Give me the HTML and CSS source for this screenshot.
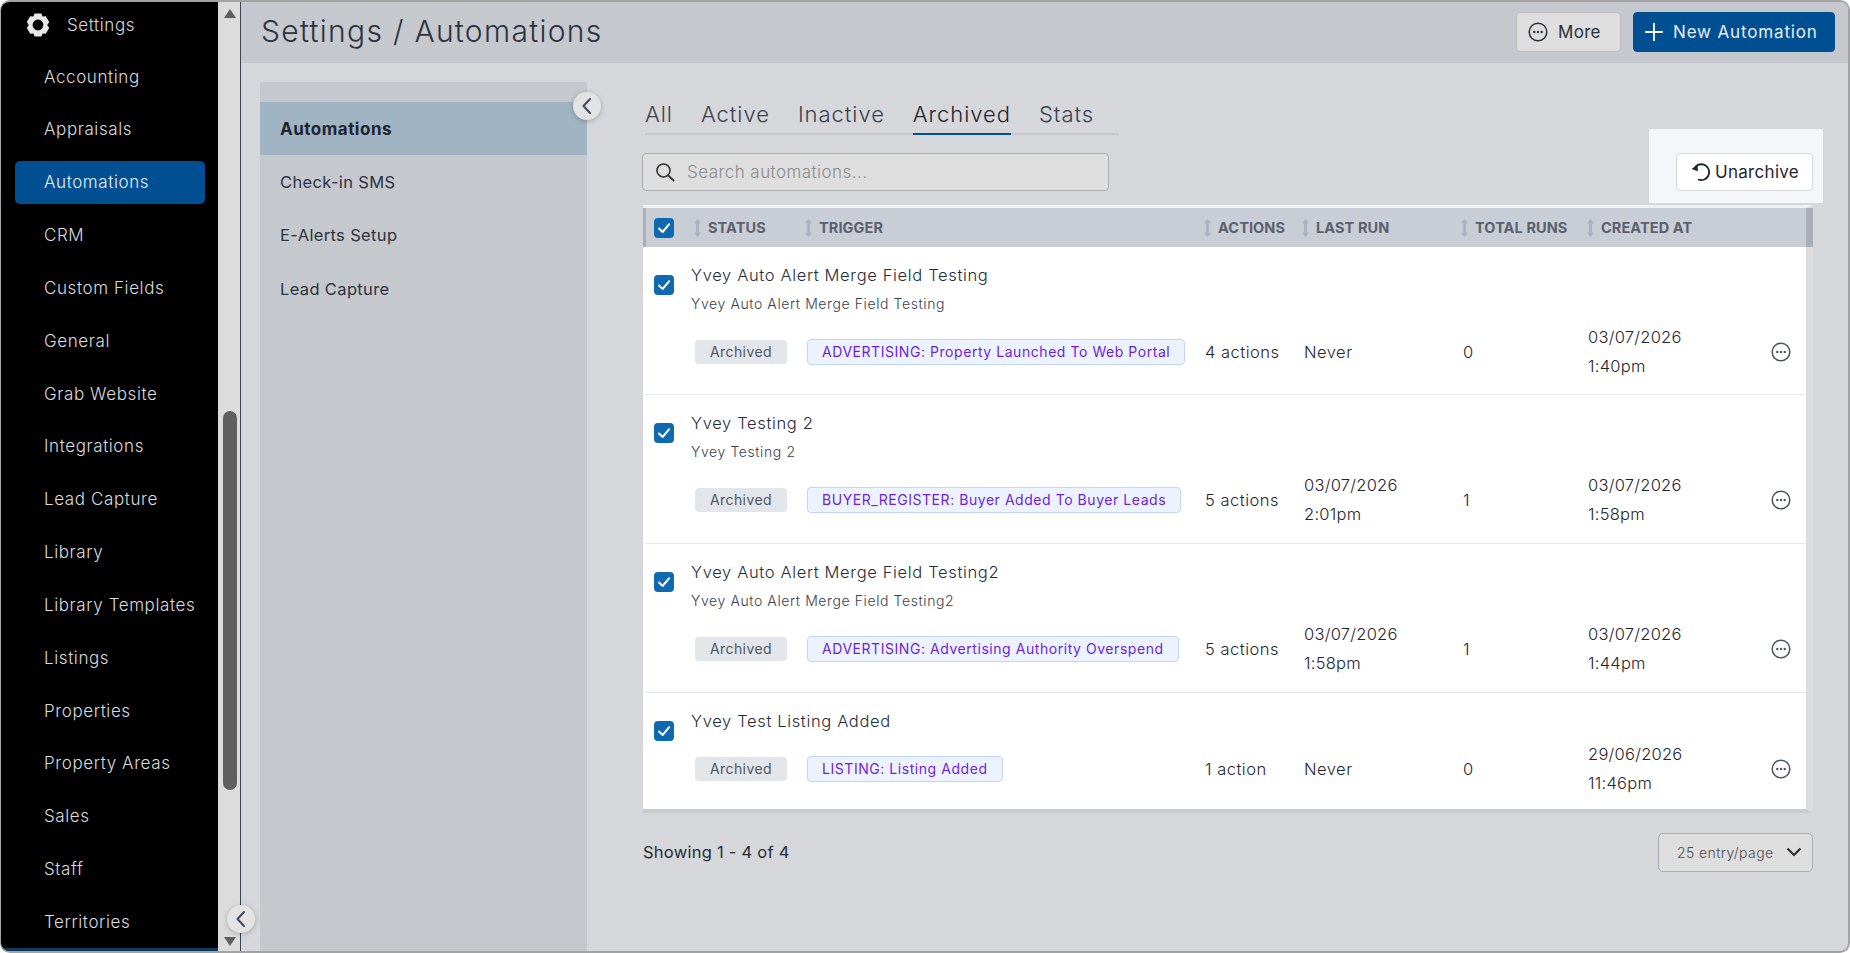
FILE: index.html
```html
<!doctype html>
<html lang="en-us">
  <head>
    <meta charset="utf-8">
    <title>Settings / Automations</title>
    <link rel="stylesheet" href="styles.css">
  </head>
  <body>
    <svg class="sprites" width="0" height="0">
      <symbol id="dots" viewBox="0 0 20 20">
        <circle cx="10" cy="10" r="8.8" fill="none" stroke="currentColor" stroke-width="1.5"/>
        <circle cx="6.3" cy="10" r="1.2" fill="currentColor"/>
        <circle cx="10" cy="10" r="1.2" fill="currentColor"/>
        <circle cx="13.7" cy="10" r="1.2" fill="currentColor"/>
      </symbol>
      <symbol id="sort" viewBox="0 0 10 20">
        <path d="M5 0 L9 5 H6.5 V15 H9 L5 20 L1 15 H3.5 V5 H1 Z" fill="currentColor"/>
      </symbol>
      <symbol id="tick" viewBox="0 0 20 20">
        <path d="M5 10.5 L8.6 14 L15.2 6.2" fill="none" stroke="#fff" stroke-width="2" stroke-linecap="round" stroke-linejoin="round"/>
      </symbol>
      <symbol id="back" viewBox="0 0 12 20">
        <path d="M9 3 L2.5 10 L9 17" fill="none" stroke="currentColor" stroke-width="2" stroke-linecap="round" stroke-linejoin="round"/>
      </symbol>
    </svg>

    <div class="window">
      <aside class="sidebar">
        <nav class="main-nav">
          <div class="nav-head">
            <svg class="gear" width="26" height="26" viewBox="0 0 26 26">
              <path d="M9.6 1.6 H16.4 L17.6 4.6 L20.8 4.2 L24.2 10 L22.2 13 L24.2 16 L20.8 21.8 L17.6 21.4 L16.4 24.4 H9.6 L8.4 21.4 L5.2 21.8 L1.8 16 L3.8 13 L1.8 10 L5.2 4.2 L8.4 4.6 Z M13 7.6 A5.4 5.4 0 1 0 13 18.4 A5.4 5.4 0 1 0 13 7.6 Z" fill="#e8e8e8" fill-rule="evenodd"/>
            </svg>
            <span>Settings</span>
          </div>
          <a class="nav-item">Accounting</a>
          <a class="nav-item">Appraisals</a>
          <a class="nav-item active">Automations</a>
          <a class="nav-item">CRM</a>
          <a class="nav-item">Custom Fields</a>
          <a class="nav-item">General</a>
          <a class="nav-item">Grab Website</a>
          <a class="nav-item">Integrations</a>
          <a class="nav-item">Lead Capture</a>
          <a class="nav-item">Library</a>
          <a class="nav-item">Library Templates</a>
          <a class="nav-item">Listings</a>
          <a class="nav-item">Properties</a>
          <a class="nav-item">Property Areas</a>
          <a class="nav-item">Sales</a>
          <a class="nav-item">Staff</a>
          <a class="nav-item">Territories</a>
        </nav>
        <div class="nav-scroll">
          <span class="arrow-up"></span>
          <span class="thumb"></span>
          <span class="arrow-down"></span>
        </div>
        <button class="round-btn sidebar-toggle"><svg width="12" height="20"><use href="#back"/></svg></button>
      </aside>

      <main class="page">
        <header class="page-header">
          <h1>Settings / Automations</h1>
          <div class="header-actions">
            <button class="btn-more"><svg width="20" height="20"><use href="#dots"/></svg>More</button>
            <button class="btn-new">
              <svg width="20" height="20" viewBox="0 0 20 20"><path d="M10 1 V19 M1 10 H19" stroke="#fff" stroke-width="1.8"/></svg>
              New Automation
            </button>
          </div>
        </header>

        <div class="page-body">
          <section class="sub-nav">
            <button class="round-btn sub-toggle"><svg width="12" height="20"><use href="#back"/></svg></button>
            <a class="sub-item selected">Automations</a>
            <a class="sub-item">Check-in SMS</a>
            <a class="sub-item">E-Alerts Setup</a>
            <a class="sub-item">Lead Capture</a>
          </section>

          <section class="content">
            <div class="tabs">
              <a class="tab">All</a>
              <a class="tab">Active</a>
              <a class="tab">Inactive</a>
              <a class="tab current">Archived</a>
              <a class="tab">Stats</a>
            </div>

            <div class="toolbar">
              <div class="search">
                <svg width="20" height="20" viewBox="0 0 20 20"><circle cx="8.5" cy="8.5" r="6.5" fill="none" stroke="#333" stroke-width="1.6"/><path d="M13.3 13.3 L18.5 18.5" stroke="#333" stroke-width="1.8" stroke-linecap="round"/></svg>
                <span>Search automations...</span>
              </div>
              <div class="bulk-panel">
                <button class="btn-unarchive">
                  <svg width="22" height="22" viewBox="0 0 20 20"><path d="M5.2 5 A7.2 7.2 0 1 1 8 17" fill="none" stroke="#1c2430" stroke-width="1.7" stroke-linecap="round"/><path d="M1.4 7.2 L6.8 3.2 L7.2 9.4 Z" fill="#1c2430"/></svg>
                  Unarchive
                </button>
              </div>
            </div>

            <div class="table">
              <div class="table-head">
                <span class="check"><svg width="20" height="20"><use href="#tick"/></svg></span>
                <span class="th th-status"><svg width="9" height="20"><use href="#sort"/></svg>STATUS</span>
                <span class="th"><svg width="9" height="20"><use href="#sort"/></svg>TRIGGER</span>
                <span class="th"><svg width="9" height="20"><use href="#sort"/></svg>ACTIONS</span>
                <span class="th"><svg width="9" height="20"><use href="#sort"/></svg>LAST RUN</span>
                <span class="th"><svg width="9" height="20"><use href="#sort"/></svg>TOTAL RUNS</span>
                <span class="th"><svg width="9" height="20"><use href="#sort"/></svg>CREATED AT</span>
              </div>

              <div class="row row-first">
                <div class="row-title">
                  <span class="check"><svg width="20" height="20"><use href="#tick"/></svg></span>
                  <div>
                    <div class="name">Yvey Auto Alert Merge Field Testing</div>
                    <div class="desc">Yvey Auto Alert Merge Field Testing</div>
                  </div>
                </div>
                <div class="row-cells">
                  <span class="chip-status">Archived</span>
                  <span class="cell-trigger"><span class="chip-trigger">ADVERTISING: Property Launched To Web Portal</span></span>
                  <span>4 actions</span>
                  <span>Never</span>
                  <span>0</span>
                  <span class="date">03/07/2026<br>1:40pm</span>
                  <svg class="row-more" width="20" height="20"><use href="#dots"/></svg>
                </div>
              </div>

              <div class="row">
                <div class="row-title">
                  <span class="check"><svg width="20" height="20"><use href="#tick"/></svg></span>
                  <div>
                    <div class="name">Yvey Testing 2</div>
                    <div class="desc">Yvey Testing 2</div>
                  </div>
                </div>
                <div class="row-cells">
                  <span class="chip-status">Archived</span>
                  <span class="cell-trigger"><span class="chip-trigger">BUYER_REGISTER: Buyer Added To Buyer Leads</span></span>
                  <span>5 actions</span>
                  <span class="date">03/07/2026<br>2:01pm</span>
                  <span>1</span>
                  <span class="date">03/07/2026<br>1:58pm</span>
                  <svg class="row-more" width="20" height="20"><use href="#dots"/></svg>
                </div>
              </div>

              <div class="row">
                <div class="row-title">
                  <span class="check"><svg width="20" height="20"><use href="#tick"/></svg></span>
                  <div>
                    <div class="name">Yvey Auto Alert Merge Field Testing2</div>
                    <div class="desc">Yvey Auto Alert Merge Field Testing2</div>
                  </div>
                </div>
                <div class="row-cells">
                  <span class="chip-status">Archived</span>
                  <span class="cell-trigger"><span class="chip-trigger">ADVERTISING: Advertising Authority Overspend</span></span>
                  <span>5 actions</span>
                  <span class="date">03/07/2026<br>1:58pm</span>
                  <span>1</span>
                  <span class="date">03/07/2026<br>1:44pm</span>
                  <svg class="row-more" width="20" height="20"><use href="#dots"/></svg>
                </div>
              </div>

              <div class="row row-short">
                <div class="row-title">
                  <span class="check"><svg width="20" height="20"><use href="#tick"/></svg></span>
                  <div>
                    <div class="name">Yvey Test Listing Added</div>
                  </div>
                </div>
                <div class="row-cells">
                  <span class="chip-status">Archived</span>
                  <span class="cell-trigger"><span class="chip-trigger">LISTING: Listing Added</span></span>
                  <span>1 action</span>
                  <span>Never</span>
                  <span>0</span>
                  <span class="date">29/06/2026<br>11:46pm</span>
                  <svg class="row-more" width="20" height="20"><use href="#dots"/></svg>
                </div>
              </div>
            </div>

            <div class="table-foot">
              <span class="showing">Showing 1 - 4 of 4</span>
              <div class="page-size">
                <span>25 entry/page</span>
                <svg width="16" height="10" viewBox="0 0 16 10"><path d="M1.5 1.5 L8 8 L14.5 1.5" fill="none" stroke="#333" stroke-width="2.2"/></svg>
              </div>
            </div>
          </section>
        </div>
      </main>
    </div>
  </body>
</html>
```

FILE: styles.css
```css
* {
  box-sizing: border-box;
}

html, body {
  height: 100%;
}

body {
  margin: 0;
  background: #fff;
  font-family: Inter, "Open Sans", sans-serif;
  color: #2b3240;
  overflow: hidden;
}

button {
  font-family: inherit;
  cursor: pointer;
}

.sprites {
  display: block;
  height: 0;
}

.window {
  display: flex;
  height: 953px;
  border: 1px solid #a3a3a3;
  border-width: 2px 2px 2px 1px;
  border-radius: 10px;
  overflow: hidden;
  background: #d5d7db;
}

/* Left sidebar */
.sidebar {
  position: relative;
  display: flex;
  width: 240px;
  flex-shrink: 0;
  border-right: 1px solid #3a4356;
}

.main-nav {
  width: 217px;
  background: #000;
  border-bottom: 3px solid #12395c;
}

.nav-head {
  display: flex;
  align-items: center;
  gap: 16px;
  height: 53px;
  padding: 0 0 8px 24px;
  color: #d8d8d8;
  font-size: 17px;
  letter-spacing: 0.6px;
  font-weight: 300;
}

.nav-item {
  display: flex;
  align-items: center;
  height: 43px;
  margin: 0 13px 9.85px 14px;
  padding-left: 29px;
  border-radius: 5px;
  color: #dcdcdc;
  font-size: 17px;
  letter-spacing: 0.6px;
  font-weight: 300;
  white-space: nowrap;
}

.nav-item.active {
  background: #004f93;
  color: #e8eef5;
}

.nav-scroll {
  position: relative;
  flex: 1;
  background: #dcdcdc;
}

.thumb {
  position: absolute;
  top: 409px;
  left: 5px;
  width: 14px;
  height: 379px;
  border-radius: 7px;
  background: #5f5f5f;
}

.arrow-up,
.arrow-down {
  position: absolute;
  left: 6px;
  width: 0;
  height: 0;
  border-left: 6px solid transparent;
  border-right: 6px solid transparent;
}

.arrow-up {
  top: 7px;
  border-bottom: 9px solid #5f5f5f;
}

.arrow-down {
  bottom: 5px;
  border-top: 9px solid #5f5f5f;
}

.round-btn {
  position: absolute;
  display: flex;
  align-items: center;
  justify-content: center;
  width: 28px;
  height: 28px;
  padding: 0;
  border: none;
  border-radius: 50%;
  background: #e3e3e3;
  color: #3d4a63;
  box-shadow: 0 1px 5px rgba(0, 0, 0, 0.25);
}

.sidebar-toggle {
  left: 226px;
  bottom: 18px;
}

/* Page */
.page {
  flex: 1;
  display: flex;
  flex-direction: column;
  min-width: 0;
}

.page-header {
  display: flex;
  align-items: center;
  justify-content: space-between;
  height: 61px;
  padding: 0 13px 0 20px;
  background: #c5c8cc;
}

.page-header h1 {
  margin: 0 0 4px;
  font-size: 30px;
  font-weight: 300;
  letter-spacing: 1.3px;
  color: #2d3340;
}

.header-actions {
  display: flex;
  gap: 12px;
  margin-bottom: 1px;
}

.btn-more,
.btn-new {
  display: flex;
  align-items: center;
  height: 40px;
  border-radius: 4px;
  font-size: 17px;
  letter-spacing: 0.3px;
}

.btn-more {
  width: 105px;
  gap: 10px;
  padding: 0 0 0 11px;
  background: #dedede;
  border: 1px solid #b8bbbf;
  color: #2b2f38;
}

.btn-new {
  width: 202px;
  gap: 9px;
  padding: 0 0 0 10px;
  background: #004f93;
  border: 1px solid #004f93;
  color: #e6edf5;
  letter-spacing: 0.85px;
}

.page-body {
  flex: 1;
  display: flex;
  min-height: 0;
  padding-top: 19px;
}

/* Second level nav */
.sub-nav {
  position: relative;
  width: 327px;
  margin-left: 19px;
  padding-top: 20px;
  background: #c5c8cc;
}

.sub-item {
  display: flex;
  align-items: center;
  height: 53.5px;
  padding-left: 20px;
  font-size: 16.5px;
  letter-spacing: 0.35px;
  color: #2d3340;
}

.sub-item.selected {
  height: 53px;
  background: #a0b4c4;
  font-size: 17px;
  font-weight: 700;
  letter-spacing: 0.5px;
  color: #1e2430;
}

.sub-toggle {
  top: 10px;
  right: -14px;
  z-index: 1;
}

/* Content */
.content {
  flex: 1;
  padding: 16px 0 0 55px;
  min-width: 0;
}

.tabs {
  display: flex;
  width: 474px;
  margin-left: 3px;
  gap: 28px;
  border-bottom: 2px solid #c5c8cc;
}

.tab {
  height: 35px;
  font-size: 22px;
  font-weight: 300;
  letter-spacing: 0.95px;
  line-height: 32px;
  color: #3b4250;
}

.tab.current {
  margin-bottom: -2px;
  height: 37px;
  border-bottom: 2px solid #004f93;
  color: #1f2530;
}

.toolbar {
  display: flex;
  align-items: flex-start;
  justify-content: space-between;
  height: 70px;
  position: relative;
  padding-top: 18px;
  margin-right: 24px;
}

.search {
  display: flex;
  align-items: center;
  gap: 12px;
  width: 467px;
  height: 38px;
  padding-left: 12px;
  background: #dedede;
  border: 1px solid #a9abad;
  border-radius: 4px;
  color: #8b8b8b;
  font-size: 17px;
  letter-spacing: 0.45px;
  font-weight: 300;
}

.bulk-panel {
  position: absolute;
  top: -6px;
  right: 1px;
  display: flex;
  align-items: flex-end;
  justify-content: flex-end;
  width: 174px;
  height: 74px;
  padding: 0 10px 12px 0;
  background: #f4f6fa;
}

.btn-unarchive {
  display: flex;
  align-items: center;
  justify-content: center;
  gap: 3px;
  width: 137px;
  height: 38px;
  padding: 0;
  background: #fff;
  border: 1px solid #d5d7db;
  border-radius: 4px;
  font-size: 17px;
  letter-spacing: 0.3px;
  color: #1f2530;
}

/* Table */
.table {
  width: 1170px;
  margin-left: 1px;
  border-top: 3px solid #f0f1f4;
  border-right: 7px solid #dcdcdc;
  border-bottom: 4px solid #c8cacd;
  background: #fff;
}

.table-head {
  display: grid;
  grid-template-columns: 39px 111px 399px 98px 159px 126px 1fr;
  align-items: center;
  height: 39px;
  padding-left: 8px;
  margin-right: -7px;
  background: #c9cdd6;
  border-left: 3px solid #a9aeb8;
  border-right: 7px solid #aaaeb6;
}

.th {
  display: flex;
  align-items: center;
  gap: 6px;
  font-size: 14.5px;
  font-weight: 700;
  letter-spacing: 0.1px;
  color: #5b606c;
}

.th svg {
  color: #aab0be;
}

.check {
  display: flex;
  width: 20px;
  height: 20px;
  border-radius: 4px;
  background: #0f69b0;
}

.row {
  height: 149px;
  padding: 18.5px 0 0 9px;
  margin-left: 2px;
  border-bottom: 1px solid #e4e7ec;
}

.row-first {
  height: 147.5px;
  padding-top: 18px;
}

.row-short {
  height: 116px;
  border-bottom: none;
}

.row-title {
  display: flex;
  gap: 17px;
  height: 58px;
}

.row-title .check {
  margin-top: 10px;
}

.row-short .row-title {
  height: 29px;
}

.name {
  height: 26px;
  margin-top: -3px;
  font-size: 16.5px;
  font-weight: 300;
  letter-spacing: 0.65px;
  line-height: 26px;
  color: #252b38;
}

.desc {
  margin-top: 7px;
  font-size: 14px;
  line-height: 17px;
  font-weight: 300;
  letter-spacing: 0.6px;
  color: #384050;
}

.row-cells {
  display: grid;
  grid-template-columns: 112px 398px 99px 159px 125px 183px 20px;
  align-items: center;
  margin-left: 41px;
  height: 56px;
  font-size: 16.5px;
  font-weight: 300;
  letter-spacing: 0.5px;
  color: #1f2530;
}

.chip-status {
  display: flex;
  align-items: center;
  justify-content: center;
  width: 92px;
  height: 24px;
  border-radius: 4px;
  background: #e2e5ea;
  font-size: 14px;
  font-weight: 400;
  letter-spacing: 0.4px;
  color: #50565f;
}

.chip-trigger {
  display: inline-flex;
  align-items: center;
  height: 26px;
  padding: 0 14px;
  border: 1px solid #bfd5fb;
  border-radius: 4px;
  background: #edf3fe;
  font-size: 14px;
  font-weight: 400;
  letter-spacing: 0.55px;
  color: #6d1ee0;
  white-space: nowrap;
}

.date {
  line-height: 28.5px;
  letter-spacing: 0.25px;
}

.row-more {
  color: #4a5263;
}

.table-foot {
  display: flex;
  align-items: center;
  justify-content: space-between;
  width: 1171px;
  margin-top: 20px;
  padding-left: 1px;
}

.showing {
  font-size: 16.5px;
  font-weight: 400;
  letter-spacing: 0.25px;
  color: #252b38;
}

.page-size {
  display: flex;
  align-items: center;
  justify-content: space-between;
  width: 155px;
  height: 39px;
  padding: 0 10px 0 18px;
  background: #dedede;
  border: 1px solid #aaacaf;
  border-radius: 5px;
  font-size: 14px;
  letter-spacing: 0.4px;
  font-weight: 300;
  color: #4d4d4d;
}
```
